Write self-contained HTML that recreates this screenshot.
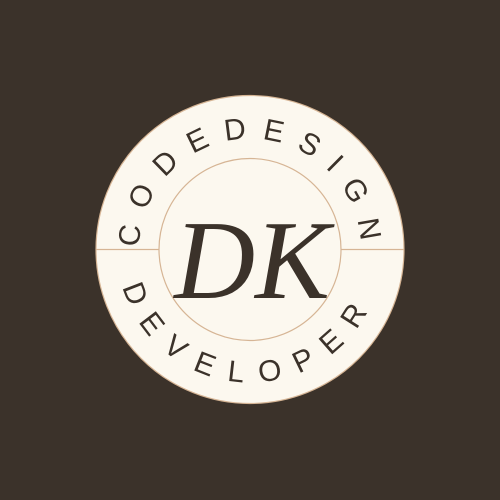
<!DOCTYPE html>
<html><head><style>
html,body{margin:0;padding:0;background:#3b322a;}
svg{display:block}
</style></head><body>
<svg width="500" height="500" viewBox="0 0 500 500" xmlns="http://www.w3.org/2000/svg">
<rect width="500" height="500" fill="#3b322a"/>
<circle cx="250" cy="249.5" r="154" fill="#fcf8ef" stroke="#d6b595" stroke-width="1.2"/>
<circle cx="250" cy="249.5" r="91" fill="none" stroke="#d6b595" stroke-width="1.2"/>
<line x1="96" y1="249.5" x2="159" y2="249.5" stroke="#d6b595" stroke-width="1.2"/>
<line x1="341" y1="249.5" x2="404" y2="249.5" stroke="#d6b595" stroke-width="1.2"/>
<defs>
<path id="top" d="M 145.7 287.5 A 111 111 0 1 1 354.3 287.5"/>
<path id="bot" d="M 117 249.5 A 133 133 0 0 0 383 249.5"/>
</defs>
<text font-family="Liberation Sans, sans-serif" font-size="30" fill="#3b322a">
<textPath href="#top" startOffset="41" textLength="338" lengthAdjust="spacing">CODEDESIGN</textPath>
</text>
<text font-family="Liberation Sans, sans-serif" font-size="30" fill="#3b322a">
<textPath href="#bot" startOffset="38" textLength="315" lengthAdjust="spacing">DEVELOPER</textPath>
</text>
<text x="252" y="298" text-anchor="middle" font-family="Liberation Serif, serif" font-style="italic" font-size="112" fill="#3b322a">DK</text>
</svg>
</body></html>
